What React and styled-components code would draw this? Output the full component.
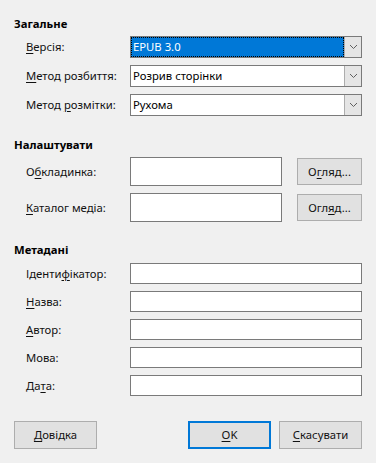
import React from "react";
import styled, { createGlobalStyle } from "styled-components";

const Global = createGlobalStyle`
  html, body { margin: 0; padding: 0; background: #f0f0f0; }
  body { font-family: "Noto Sans", "Open Sans", sans-serif; font-size: 11.3px; color: #000; }
`;

const Dialog = styled.div`
  width: 376px;
  height: 463px;
  box-sizing: border-box;
  padding: 16px 14px 0 14px;
  display: flex;
  flex-direction: column;
`;

const Section = styled.div`
  display: flex;
  flex-direction: column;
  margin-top: ${(p) => p.$top || 0}px;
`;

const Heading = styled.div`
  font-weight: 700;
  line-height: 16px;
  height: 16px;
  margin-bottom: ${(p) => p.$gap || 4}px;
`;

const Rows = styled.div`
  display: flex;
  flex-direction: column;
  gap: 7px;
  padding-left: 12px;
`;

const Row = styled.div`
  display: flex;
  align-items: center;
  height: ${(p) => p.$h}px;
`;

const Label = styled.div`
  width: 104px;
  flex: none;
  line-height: 16px;
  color: #111;
  white-space: nowrap;
`;

const Key = styled.span`
  text-decoration: underline;
  text-underline-offset: 2px;
  text-decoration-thickness: 1px;
`;

const Combo = styled.div`
  flex: 1;
  height: 22px;
  box-sizing: border-box;
  border: 1px solid #7a7a7a;
  background: #fff;
  display: flex;
`;

const ComboValue = styled.div`
  flex: 1;
  display: flex;
  align-items: center;
  box-sizing: border-box;
  padding-left: ${(p) => (p.$focus ? 1 : 2)}px;
  background: ${(p) => (p.$focus ? "#0078d7" : "#fff")};
  color: ${(p) => (p.$focus ? "#fff" : "#000")};
  border: ${(p) => (p.$focus ? "1px dotted #000" : "none")};
  line-height: 16px;
`;

const ComboArrow = styled.div`
  width: 17px;
  flex: none;
  box-sizing: border-box;
  background: #e5e5e5;
  border-left: 1px solid #adadad;
  display: flex;
  align-items: center;
  justify-content: center;
`;

const TextField = styled.div`
  flex: ${(p) => (p.$w ? "none" : 1)};
  width: ${(p) => (p.$w ? `${p.$w}px` : "auto")};
  height: ${(p) => p.$h}px;
  box-sizing: border-box;
  border: 1px solid #7a7a7a;
  background: #fff;
`;

const Button = styled.div`
  width: ${(p) => p.$w}px;
  height: ${(p) => p.$h}px;
  box-sizing: border-box;
  background: #e1e1e1;
  border: ${(p) => (p.$default ? "2px solid #0078d7" : "1px solid #adadad")};
  display: flex;
  align-items: center;
  justify-content: center;
  flex: none;
  line-height: 16px;
  color: #111;
  margin-left: ${(p) => p.$ml || 0}px;
`;

const Footer = styled.div`
  display: flex;
  align-items: center;
  margin-top: 25px;
`;

const Spacer = styled.div`
  flex: 1;
`;

const Chevron = () => (
  <svg width="9" height="6" viewBox="0 0 9 6">
    <polyline points="1,1 4.5,4.5 8,1" fill="none" stroke="#606060" strokeWidth="1" />
  </svg>
);

const ComboBox = ({ children, focus }) => (
  <Combo>
    <ComboValue $focus={focus}>{children}</ComboValue>
    <ComboArrow>
      <Chevron />
    </ComboArrow>
  </Combo>
);

export default function App() {
  return (
    <>
      <Global />
      <Dialog>
        <Section>
          <Heading>Загальне</Heading>
          <Rows>
            <Row $h={22}>
              <Label><Key>В</Key>ерсія:</Label>
              <ComboBox focus>EPUB 3.0</ComboBox>
            </Row>
            <Row $h={22}>
              <Label><Key>М</Key>етод розбиття:</Label>
              <ComboBox>Розрив сторінки</ComboBox>
            </Row>
            <Row $h={22}>
              <Label>Метод <Key>р</Key>озмітки:</Label>
              <ComboBox>Рухома</ComboBox>
            </Row>
          </Rows>
        </Section>

        <Section $top={21}>
          <Heading>Налаштувати</Heading>
          <Rows>
            <Row $h={29}>
              <Label>О<Key>б</Key>кладинка:</Label>
              <TextField $w={152} $h={29} />
              <Spacer />
              <Button $w={65} $h={27}>О<Key>г</Key>ляд...</Button>
            </Row>
            <Row $h={29}>
              <Label><Key>К</Key>аталог медіа:</Label>
              <TextField $w={152} $h={29} />
              <Spacer />
              <Button $w={65} $h={27}>Огл<Key>я</Key>д...</Button>
            </Row>
          </Rows>
        </Section>

        <Section $top={20}>
          <Heading $gap={5}>Метадані</Heading>
          <Rows>
            <Row $h={21}>
              <Label>Іденти<Key>ф</Key>ікатор:</Label>
              <TextField $h={21} />
            </Row>
            <Row $h={21}>
              <Label><Key>Н</Key>азва:</Label>
              <TextField $h={21} />
            </Row>
            <Row $h={21}>
              <Label><Key>А</Key>втор:</Label>
              <TextField $h={21} />
            </Row>
            <Row $h={21}>
              <Label>Мова:</Label>
              <TextField $h={21} />
            </Row>
            <Row $h={21}>
              <Label>Да<Key>т</Key>а:</Label>
              <TextField $h={21} />
            </Row>
          </Rows>
        </Section>

        <Footer>
          <Button $w={83} $h={28}><Key>Д</Key>овідка</Button>
          <Spacer />
          <Button $w={83} $h={28} $default><Key>O</Key>K</Button>
          <Button $w={83} $h={28} $ml={8}><Key>С</Key>касувати</Button>
        </Footer>
      </Dialog>
    </>
  );
}
